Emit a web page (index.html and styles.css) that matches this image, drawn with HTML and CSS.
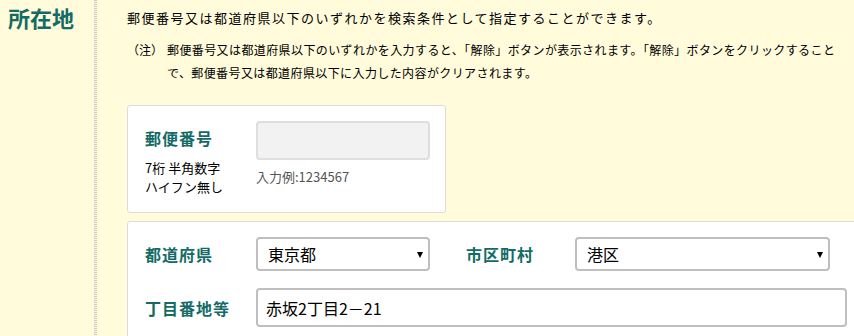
FILE: index.html
```html
<!DOCTYPE html>
<html lang="ja">
<head>
  <meta charset="UTF-8" />
  <meta name="viewport" content="width=device-width, initial-scale=1.0"/>
  <title>所在地</title>
  <link rel="stylesheet" href="styles.css">
</head>
<body>

  <!-- 所在地 -->
  <div class="section">
    <div class="section-head">
      <h2>所在地</h2>
    </div>
    <div class="section-body">
      <p class="lead">郵便番号又は都道府県以下のいずれかを検索条件として指定することができます。</p>
      <div class="note">
        <span class="note-mark">（注）</span>
        <p class="note-text">郵便番号又は都道府県以下のいずれかを入力すると、「解除」ボタンが表示されます。「解除」ボタンをクリックすることで、郵便番号又は都道府県以下に入力した内容がクリアされます。</p>
      </div>

      <div class="card card-zip">
        <div class="label-col">
          <div class="label">郵便番号</div>
          <div class="hint">7桁 半角数字<br>ハイフン無し</div>
        </div>
        <div class="field-col">
          <input type="text" class="zip-input" disabled>
          <div class="example">入力例:1234567</div>
        </div>
      </div>

      <div class="card card-address">
        <div class="row">
          <div class="label label-wide">都道府県</div>
          <span class="select-wrap pref">
            <select><option>東京都</option></select>
          </span>
          <div class="label label-city">市区町村</div>
          <span class="select-wrap city">
            <select><option>港区</option></select>
          </span>
        </div>
        <div class="row">
          <div class="label label-wide">丁目番地等</div>
          <input type="text" class="addr-input" value="赤坂2丁目2－21">
        </div>
      </div>
    </div>
  </div>

</body>
</html>
```

FILE: styles.css
```css
body {
  margin:0; background:#fffbdb; overflow:hidden;
  font-family:"Noto Sans CJK JP","Noto Sans",sans-serif; color:#000;
}
.section { display:flex; min-height:336px; }
.section-head { flex:none; width:86px; padding:4px 0 0 8px; }
.section-head h2 {
  margin:0; font-size:22px; line-height:26px; font-weight:bold; color:#146b66;
  white-space:nowrap;
}
.section-body {
  flex:1; min-width:0; padding:8px 0 0 33px;
  background:repeating-linear-gradient(to bottom, #c8c8c8 0 1px, transparent 1px 2px) left top / 3px 100% no-repeat;
}
.lead { margin:0; font-size:13px; line-height:20px; letter-spacing:1.5px; white-space:nowrap; }

.note { display:flex; margin-top:10px; font-size:12px; line-height:23px; }
.note-mark { width:40px; flex:none; }
.note-text { margin:0; width:690px; flex:none; letter-spacing:0.4px; }

.card {
  background:#fff; border:1px solid #dcdcdc; border-radius:3px;
  padding:15px 16px 16px 17px; box-sizing:border-box;
}
.card-zip { display:flex; width:319px; margin-top:21px; }
.label-col { width:111px; flex:none; padding-top:7px; }
.label {
  font-size:16px; line-height:20px; font-weight:bold; color:#146b66; letter-spacing:1px;
  flex:none;
}
.hint { margin-top:10px; font-size:13px; line-height:19px; }
.zip-input {
  display:block; width:174px; height:39px; box-sizing:border-box;
  background:#f2f2f2; border:2px solid #dedede; border-radius:4px; margin:0;
}
.example { margin-top:8px; font-size:13px; line-height:18px; color:#555; }

.card-address { width:760px; margin-top:8px; padding-bottom:20px; }
.row { display:flex; align-items:center; }
.row + .row { margin-top:17px; }
.label-wide { width:111px; }
.label-city { width:109px; margin-left:36px; }

.select-wrap { position:relative; display:block; flex:none; }
.select-wrap.pref { width:174px; }
.select-wrap.city { width:255px; }
.select-wrap select {
  appearance:none; -webkit-appearance:none; width:100%; height:34px; margin:0;
  border:2px solid #bfbfbf; border-radius:4px; background:#fff;
  padding:0 20px 0 10px; font:inherit; font-size:16px; color:#000;
}
.select-wrap::after {
  content:""; position:absolute; right:7px; top:15px;
  border-left:3px solid transparent; border-right:3px solid transparent;
  border-top:6px solid #000;
}
.addr-input {
  flex:none; width:591px; height:39px; box-sizing:border-box; margin:0;
  border:2px solid #bfbfbf; border-radius:4px; background:#fff;
  padding:0 8px; font:inherit; font-size:16px; color:#000;
}
```
